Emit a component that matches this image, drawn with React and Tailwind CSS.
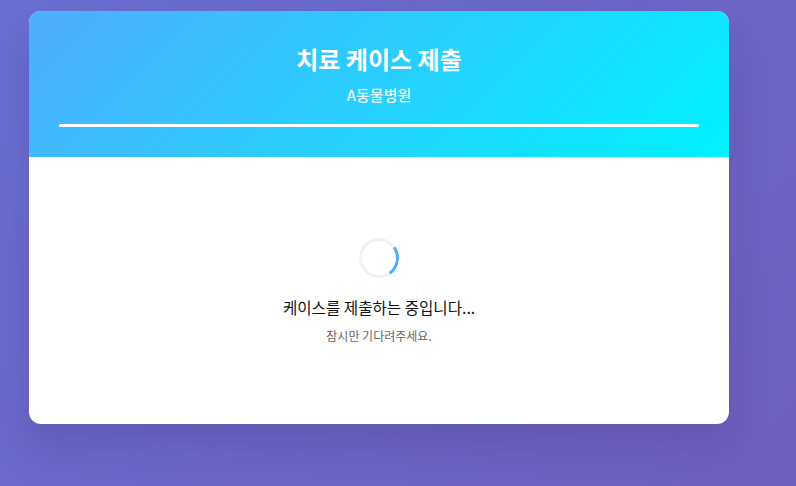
import React from 'react';

const Spinner = () => {
  return (
    <div className="w-10 h-10 rounded-full border-[3px] border-[#f1f1f1] border-r-[#4facfe] rotate-[10deg]" />
  );
};

const SubmitHeader = ({ title, hospital }) => {
  return (
    <div className="bg-[linear-gradient(135deg,#4facfe_0%,#00f2fe_100%)] px-[30px] pt-[31px] pb-[30px] text-white text-center">
      <h1 className="text-[24px] leading-[34px] font-bold">{title}</h1>
      <p className="mt-[9px] text-[15px] leading-[20px] opacity-90 font-medium">{hospital}</p>
      <div className="mt-[19px] h-[3px] rounded-full bg-white" />
    </div>
  );
};

const App = () => {
  return (
    <div
      className="min-h-screen bg-[linear-gradient(135deg,#6a70d2_0%,#7060bd_100%)] pl-[29px] pt-[11px] pb-10"
      style={{ fontFamily: '"Noto Sans CJK KR", "Noto Sans", sans-serif' }}
    >
      <div className="w-[700px] rounded-xl overflow-hidden bg-white shadow-[0_20px_40px_rgba(40,20,90,0.18)]">
        <SubmitHeader title="치료 케이스 제출" hospital="A동물병원" />
        <div className="flex flex-col items-center pt-[81px] pb-[79px]">
          <Spinner />
          <p className="mt-[18px] text-[15.6px] leading-[22px] text-[#111]">케이스를 제출하는 중입니다...</p>
          <p className="mt-[9px] text-[12px] leading-[18px] text-[#666]">잠시만 기다려주세요.</p>
        </div>
      </div>
    </div>
  );
};

export default App;
